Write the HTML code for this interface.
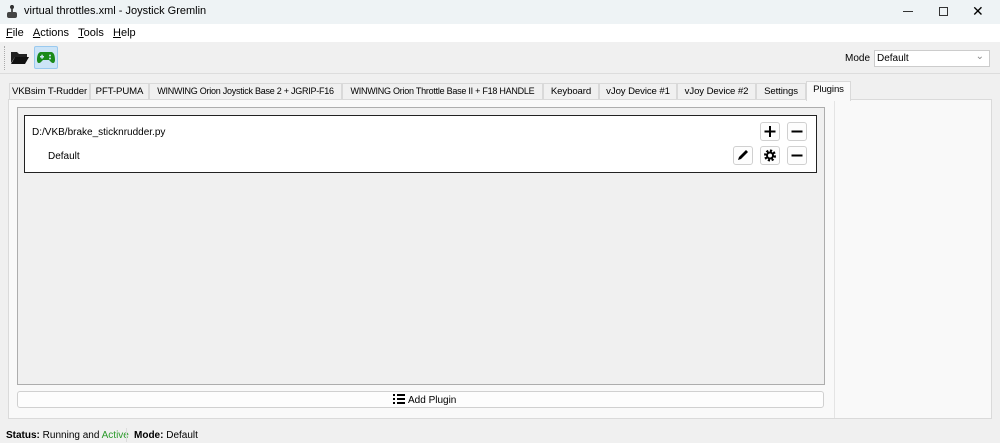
<!DOCTYPE html><html><head><style>
*{margin:0;padding:0;box-sizing:border-box}
body{width:1000px;height:443px;overflow:hidden;background:#f0f0f0;font-family:"Liberation Sans",sans-serif;font-size:11px;color:#000;position:relative}
.a{position:absolute;white-space:nowrap}
.tab{position:absolute;top:83px;height:17px;border:1px solid #d9d9d9;border-bottom:none;background:#f0f0f0;text-align:center;line-height:15px;font-size:9.6px;white-space:nowrap;overflow:hidden;letter-spacing:-0.1px}
.btn{position:absolute;width:20px;height:19px;background:#fdfdfd;border:1px solid #d0d0d0;border-radius:3px}
</style></head><body>
<div class="a" style="left:0;top:0;width:1000px;height:24px;background:#eef3f5"></div>
<svg class="a" style="left:6px;top:5px" width="12" height="14"><rect x="5" y="0" width="2" height="7" fill="#555"/><ellipse cx="6" cy="2" rx="2" ry="2" fill="#333"/><rect x="1" y="7" width="10" height="6" rx="2" fill="#444"/></svg>
<div class="a" style="left:24px;top:5px;font-size:11px">virtual throttles.xml - Joystick Gremlin</div>
<div class="a" style="left:903px;top:11px;width:10px;height:1px;background:#333"></div>
<div class="a" style="left:939px;top:7px;width:9px;height:9px;border:1px solid #333"></div>
<div class="a" style="left:972px;top:3px;font-size:14px">✕</div>
<div class="a" style="left:0;top:24px;width:1000px;height:18px;background:#fff"></div>
<div class="a" style="left:6px;top:27px;font-size:11px"><u>F</u>ile &nbsp;&nbsp;<u>A</u>ctions &nbsp;&nbsp;<u>T</u>ools &nbsp;&nbsp;<u>H</u>elp</div>
<div class="a" style="left:0;top:73px;width:1000px;height:1px;background:#ddd"></div>
<div class="a" style="left:4px;top:46px;width:1px;height:24px;border-left:1px dotted #aaa"></div>
<svg class="a" style="left:11px;top:50px" width="18" height="14"><path d="M0 2h6l2 2h8v3H4L0 13z" fill="#222"/><path d="M4 7h14l-4 7H0z" fill="#111"/></svg>
<div class="a" style="left:34px;top:46px;width:24px;height:23px;background:#cce4f7;border:1px solid #99c9ef;border-radius:2px"></div>
<svg class="a" style="left:37px;top:51px" width="18" height="13"><path d="M4 1h10c3 0 4 4 4 8 0 3-2 4-4 2l-2-2H6l-2 2c-2 2-4 1-4-2 0-4 1-8 4-8z" fill="#1a8a1a"/><rect x="3" y="5" width="4" height="1.5" fill="#cce4f7"/><rect x="4.3" y="3.7" width="1.5" height="4" fill="#cce4f7"/><circle cx="13" cy="4.5" r="1" fill="#cce4f7"/><circle cx="13" cy="7.5" r="1" fill="#cce4f7"/></svg>
<div class="a" style="left:845px;top:53px;font-size:10px">Mode</div>
<div class="a" style="left:874px;top:50px;width:116px;height:17px;background:#fff;border:1px solid #ccc;padding:2px 2px;font-size:10px">Default<span style="position:absolute;right:5px;top:0;color:#888">⌄</span></div>
<div class="tab" style="left:9px;width:81px">VKBsim T-Rudder</div>
<div class="tab" style="left:90px;width:59px">PFT-PUMA</div>
<div class="tab" style="left:149px;width:193px;font-size:9px;letter-spacing:-0.25px">WINWING Orion Joystick Base 2 + JGRIP-F16</div>
<div class="tab" style="left:342px;width:201px;font-size:9px;letter-spacing:-0.25px">WINWING Orion Throttle Base II + F18 HANDLE</div>
<div class="tab" style="left:543px;width:56px">Keyboard</div>
<div class="tab" style="left:599px;width:78px">vJoy Device #1</div>
<div class="tab" style="left:677px;width:79px">vJoy Device #2</div>
<div class="tab" style="left:756px;width:50px">Settings</div>
<div class="tab" style="left:806px;top:81px;height:20px;width:45px;background:#f9f9f9;z-index:2">Plugins</div>
<div class="a" style="left:8px;top:99px;width:984px;height:320px;border:1px solid #dadada;background:#f9f9f9"></div>
<div class="a" style="left:17px;top:107px;width:808px;height:278px;border:1px solid #adadad;background:#f0f0f0"></div>
<div class="a" style="left:834px;top:100px;width:1px;height:318px;background:#e4e4e4"></div>
<div class="a" style="left:24px;top:115px;width:793px;height:58px;border:1px solid #222;background:#fff"></div>
<div class="a" style="left:32px;top:127px;font-size:10px">D:/VKB/brake_sticknrudder.py</div>
<div class="a" style="left:48px;top:151px;font-size:10px">Default</div>
<div class="btn" style="left:760px;top:122px"><svg width="18" height="17"><path d="M9 3v11M3.5 8.5h11" stroke="#000" stroke-width="2"/></svg></div>
<div class="btn" style="left:787px;top:122px"><svg width="18" height="17"><path d="M3.5 8.5h11" stroke="#000" stroke-width="2"/></svg></div>
<div class="btn" style="left:733px;top:146px"><svg width="18" height="17"><path d="M4 13l1-3 7-7 2 2-7 7z" fill="#000"/></svg></div>
<div class="btn" style="left:760px;top:146px"><svg width="18" height="17"><circle cx="9" cy="8.5" r="4.5" fill="none" stroke="#000" stroke-width="3" stroke-dasharray="2 1.5"/><circle cx="9" cy="8.5" r="3" fill="none" stroke="#000" stroke-width="2"/></svg></div>
<div class="btn" style="left:787px;top:146px"><svg width="18" height="17"><path d="M3.5 8.5h11" stroke="#000" stroke-width="2"/></svg></div>
<div class="a" style="left:17px;top:391px;width:807px;height:17px;border:1px solid #d0d0d0;border-radius:3px;background:#fdfdfd"></div>
<svg class="a" style="left:393px;top:394px" width="12" height="10"><path d="M0 1h2M4 1h8M0 5h2M4 5h8M0 9h2M4 9h8" stroke="#000" stroke-width="2"/></svg>
<div class="a" style="left:408px;top:395px;font-size:10px">Add Plugin</div>
<div class="a" style="left:6px;top:430px;font-size:10px"><b>Status:</b> Running and <span style="color:#2a9a2a">Active</span></div>
<div class="a" style="left:126px;top:428px;width:1px;height:14px;background:#ddd"></div>
<div class="a" style="left:134px;top:430px;font-size:10px"><b>Mode:</b> Default</div>
</body></html>
